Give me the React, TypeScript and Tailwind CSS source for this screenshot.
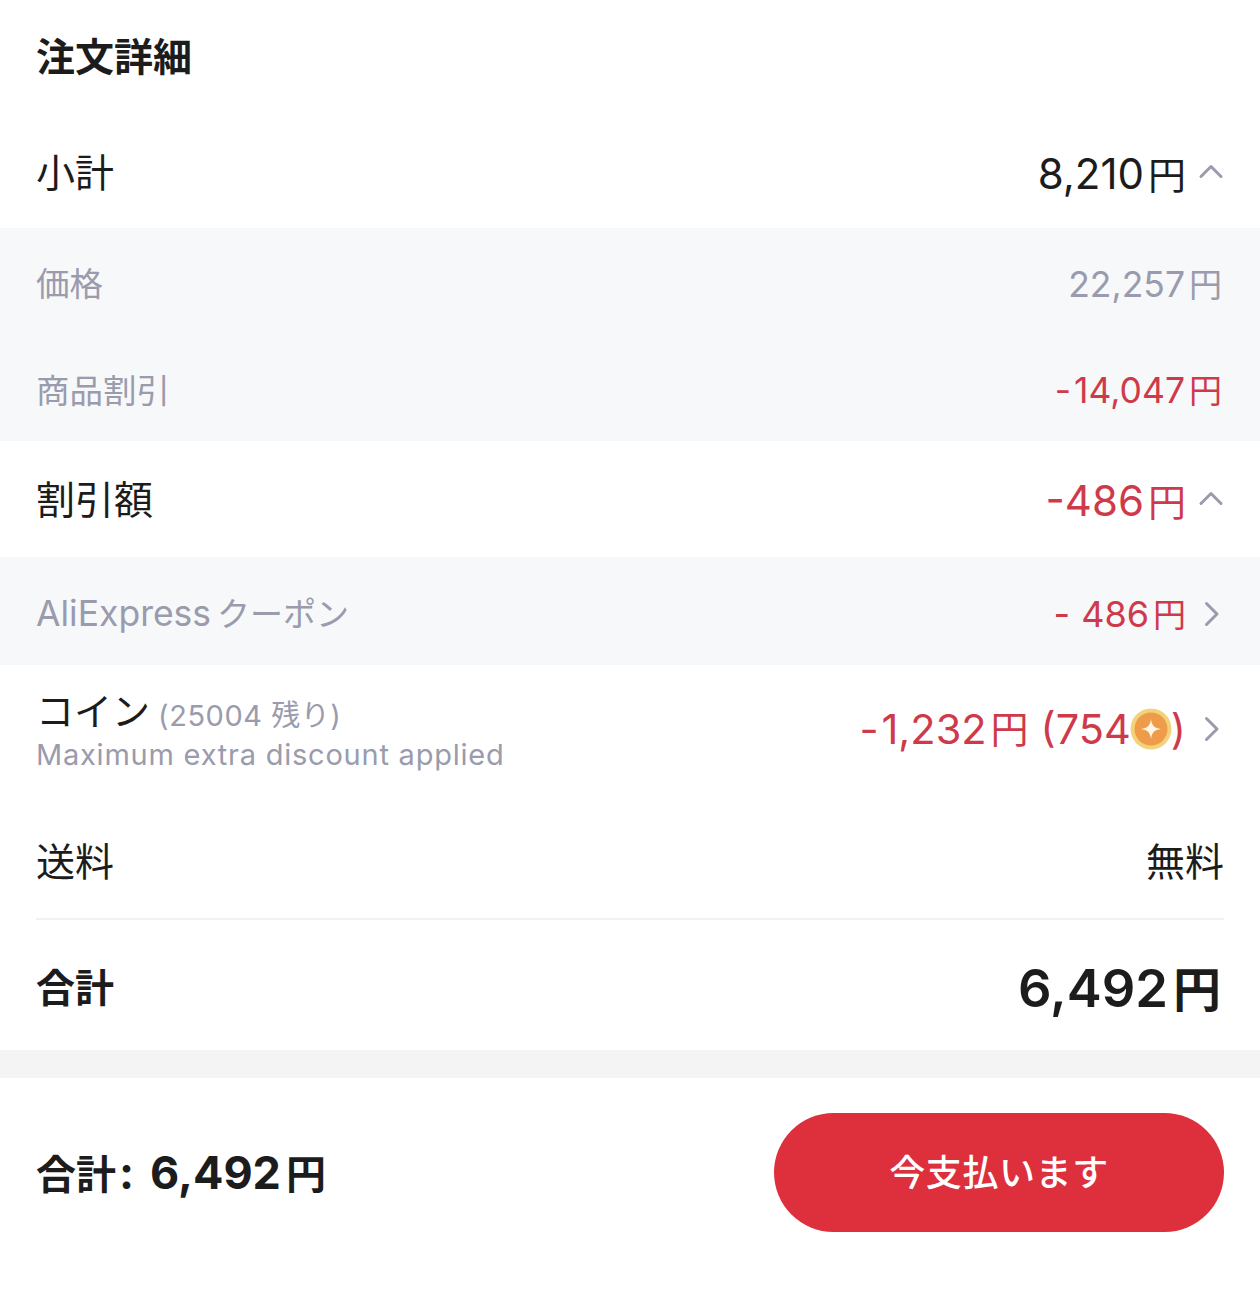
const stack = "font-['Inter','Noto_Sans_CJK_JP',sans-serif]";

function Chevron({ dir }: { dir: "up" | "right" }) {
  return (
    <svg width="26" height="26" viewBox="0 0 26 26" fill="none" stroke="#9a9bac" strokeWidth="3" strokeLinecap="round" strokeLinejoin="round" className={dir === "up" ? "shrink-0 -mt-[5px]" : "shrink-0"}>
      {dir === "up" ? <path d="M3 18.500 L13 8.500 L23 18.500" /> : <path d="M8.500 2.500 L19 13 L8.500 23.500" />}
    </svg>
  );
}

function Coin() {
  return (
    <svg width="42" height="42" viewBox="0 0 42 42" className="shrink-0 -mx-[1px]">
      <circle cx="21" cy="21" r="20.500" fill="#f3d27c" />
      <circle cx="21" cy="21" r="16.500" fill="#ee9c4a" />
      <path d="M21 11 C21.800 17.500 24.500 20.200 31 21 C24.500 21.800 21.800 24.500 21 31 C20.200 24.500 17.500 21.800 11 21 C17.500 20.200 20.200 17.500 21 11 Z" fill="#fff6e6" />
    </svg>
  );
}

export default function App() {
  return (
    <div className={`${stack} w-[1260px] h-[1299px] bg-white text-[#1c1c1c] overflow-hidden`}>
      <div className="h-[115px] px-9 flex items-center text-[39px] font-bold">注文詳細</div>

      <div className="h-[113px] px-9 pt-[3px] flex items-center justify-between text-[39px]">
        <span>小計</span>
        <span className="flex items-center gap-3">
          <span className="flex items-baseline"><span className="text-[42px]">8,210</span><span className="ml-[4px] text-[38px]">円</span></span>
          <Chevron dir="up" />
        </span>
      </div>

      <div className="bg-[#f7f8fa] text-[33.500px] text-[#9a9bac]">
        <div className="h-[107px] px-9 pt-[6px] flex items-center justify-between">
          <span>価格</span>
          <span className="flex items-baseline mr-[2px]"><span className="text-[35.500px]">22,257</span><span className="ml-[4px] text-[33px]">円</span></span>
        </div>
        <div className="h-[106px] px-9 pt-[6px] flex items-center justify-between">
          <span>商品割引</span>
          <span className="flex items-baseline mr-[2px] text-[#cf3a4a]"><span className="text-[35.500px]">-</span><span className="ml-[3px] text-[35.500px]">14,047</span><span className="ml-[4px] text-[33px]">円</span></span>
        </div>
      </div>

      <div className="h-[116px] px-9 pt-[3px] flex items-center justify-between text-[39px]">
        <span>割引額</span>
        <span className="flex items-center gap-3 text-[#cf3a4a]">
          <span className="flex items-baseline"><span className="text-[42px]">-486</span><span className="ml-[4px] text-[38px]">円</span></span>
          <Chevron dir="up" />
        </span>
      </div>

      <div className="h-[108px] px-9 pt-[6px] bg-[#f7f8fa] flex items-center justify-between text-[#9a9bac]">
        <span className="flex items-baseline text-[33px]"><span className="text-[35.500px]">AliExpress</span><span className="ml-[6px]">クーポン</span></span>
        <span className="flex items-center gap-3 text-[#cf3a4a]">
          <span className="flex items-baseline text-[36px]"><span>-</span><span className="ml-[11px]">486</span><span className="ml-[4px] text-[33px]">円</span></span>
          <Chevron dir="right" />
        </span>
      </div>

      <div className="h-[135px] px-9 pb-[5px] flex items-center justify-between">
        <div className="flex flex-col pt-[2px]">
          <div className="flex items-baseline gap-2 leading-[44px]">
            <span className="text-[38px]">コイン</span>
            <span className="text-[29px] text-[#9a9bac] tracking-[0.55px] translate-y-[1px]">(25004 残り)</span>
          </div>
          <span className="text-[29px] leading-[36px] text-[#9a9bac] tracking-[0.77px]">Maximum extra discount applied</span>
        </div>
        <span className="flex items-center gap-3 text-[#cf3a4a] mb-[2px]">
          <span className="flex items-center text-[41.500px]">
            <span>-</span><span className="ml-[3px]">1,232</span><span className="ml-[4px] text-[38px]">円</span><span className="ml-[12px]">(754</span><Coin />)
          </span>
          <Chevron dir="right" />
        </span>
      </div>

      <div className="h-[120px] mx-9 pt-[6px] flex items-center justify-between text-[39px] border-b-2 border-[#f2f2f3]">
        <span>送料</span>
        <span>無料</span>
      </div>

      <div className="h-[130px] px-9 pt-[6px] flex items-center justify-between font-bold">
        <span className="text-[39px]">合計</span>
        <span className="flex items-baseline mr-[3px]"><span className="text-[52.500px] font-semibold">6,492</span><span className="ml-[5px] text-[48px]">円</span></span>
      </div>

      <div className="h-[28px] bg-[#f4f4f4]" />

      <div className="h-[221px] px-9 pb-[32px] flex items-center justify-between">
        <span className="flex items-baseline font-bold">
          <span className="text-[40px]">合計</span>
          <span className="text-[45px] ml-[3px]">:</span>
          <span className="text-[45px] ml-[16px]">6,492</span>
          <span className="text-[40px] ml-[5px]">円</span>
        </span>
        <button className="w-[450px] h-[119px] rounded-[60px] bg-[#dd2f3c] text-white text-[36px] font-medium tracking-[0.6px]">今支払います</button>
      </div>
    </div>
  );
}
